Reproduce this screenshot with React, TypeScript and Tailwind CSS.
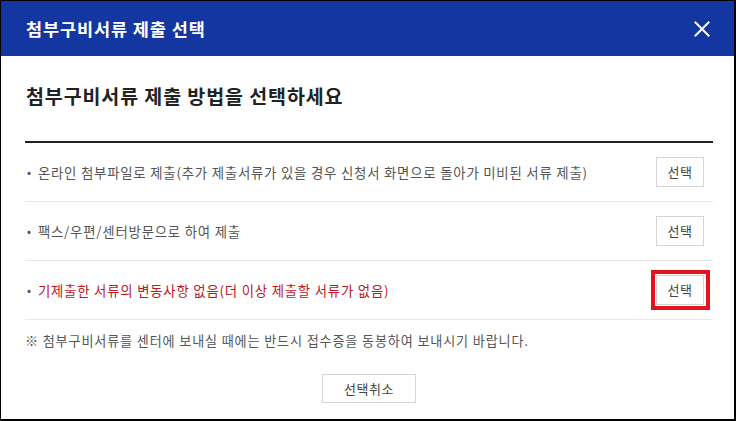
import { useState } from 'react';

const OPTIONS = [
  { key: 'online', label: '온라인 첨부파일로 제출(추가 제출서류가 있을 경우 신청서 화면으로 돌아가 미비된 서류 제출)', warn: false },
  { key: 'offline', label: '팩스/우편/센터방문으로 하여 제출', warn: false },
  { key: 'none', label: '기제출한 서류의 변동사항 없음(더 이상 제출할 서류가 없음)', warn: true },
];

function CloseIcon() {
  return (
    <svg width="16" height="16" viewBox="0 0 16 16" fill="none" stroke="#fff" strokeWidth="2" strokeLinecap="square">
      <path d="M1.5 1.5 L14.5 14.5 M14.5 1.5 L1.5 14.5" />
    </svg>
  );
}

export default function App() {
  const [picked, setPicked] = useState<string | null>(null);

  return (
    <div
      className="w-[736px] h-[421px] border-l border-t border-r-2 border-b-2 border-black bg-white flex flex-col overflow-hidden"
      style={{ fontFamily: '"Noto Sans CJK KR", "Noto Sans", sans-serif' }}
    >
      <div className="h-[55px] shrink-0 bg-[#1336a0] flex items-center justify-between pl-[25px] pr-[20px]">
        <h1 className="text-[17.5px] font-bold text-white leading-none tracking-[0.9px]">첨부구비서류 제출 선택</h1>
        <button type="button" className="w-[24px] h-[24px] grid place-items-center" aria-label="닫기">
          <CloseIcon />
        </button>
      </div>

      <div className="flex-1 flex flex-col pl-[24px] pr-[21px]">
        <h2 className="mt-[26px] text-[19.5px] leading-[28px] font-bold text-[#222] pl-[1px] tracking-[0.9px]">
          첨부구비서류 제출 방법을 선택하세요
        </h2>

        <div className="mt-[31px] border-t-2 border-[#222]">
          {OPTIONS.map((option) => (
            <div key={option.key} className="h-[59px] border-b border-[#e8e8e8] flex items-center justify-between">
              <p className={`text-[13.4px] leading-[20px] tracking-[0.78px] ${option.warn ? 'text-[#c0161e]' : 'text-[#555]'}`}>
                <span className="inline-block text-[#555] text-[12px] pl-[2px] mr-[6px] align-[1px]">•</span>
                {option.label}
              </p>
              <div className="relative mr-[9px]">
                <button
                  type="button"
                  onClick={() => setPicked(option.key)}
                  className={`w-[48px] h-[30px] border text-[13px] text-[#444] bg-white tracking-[0.5px] ${picked === option.key ? 'border-[#888]' : 'border-[#d4d4d4]'}`}
                >
                  선택
                </button>
                {option.warn && (
                  <span className="absolute -left-[5px] -top-[5px] -right-[6px] -bottom-[5px] border-[4px] border-[#e3141b] pointer-events-none" />
                )}
              </div>
            </div>
          ))}
        </div>

        <p className="mt-[11px] text-[13.1px] leading-[20px] text-[#555] tracking-[0.85px]">
          ※ 첨부구비서류를 센터에 보내실 때에는 반드시 접수증을 동봉하여 보내시기 바랍니다.
        </p>

        <div className="mt-[23px] flex justify-center">
          <button
            type="button"
            onClick={() => setPicked(null)}
            className="w-[94px] h-[29px] border border-[#d4d4d4] bg-white text-[13px] text-[#444] tracking-[0.5px]"
          >
            선택취소
          </button>
        </div>
      </div>
    </div>
  );
}
